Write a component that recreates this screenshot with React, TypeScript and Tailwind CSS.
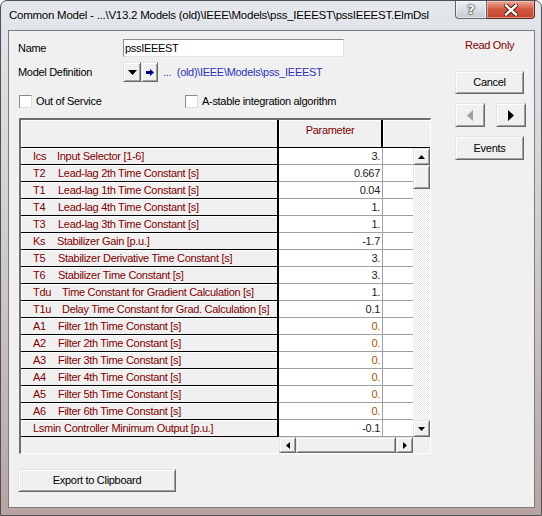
import React from 'react';

const rows = [
  { name: 'Ics', w: 'w-[24px]', desc: 'Input Selector [1-6]', value: '3.' },
  { name: 'T2', w: 'w-[25px]', desc: 'Lead-lag 2th Time Constant [s]', value: '0.667' },
  { name: 'T1', w: 'w-[25px]', desc: 'Lead-lag 1th Time Constant [s]', value: '0.04' },
  { name: 'T4', w: 'w-[25px]', desc: 'Lead-lag 4th Time Constant [s]', value: '1.' },
  { name: 'T3', w: 'w-[25px]', desc: 'Lead-lag 3th Time Constant [s]', value: '1.' },
  { name: 'Ks', w: 'w-[24px]', desc: 'Stabilizer Gain [p.u.]', value: '-1.7' },
  { name: 'T5', w: 'w-[25px]', desc: 'Stabilizer Derivative Time Constant [s]', value: '3.' },
  { name: 'T6', w: 'w-[25px]', desc: 'Stabilizer Time Constant [s]', value: '3.' },
  { name: 'Tdu', w: 'w-[29px]', desc: 'Time Constant for Gradient Calculation [s]', value: '1.' },
  { name: 'T1u', w: 'w-[29px]', desc: 'Delay Time Constant for Grad. Calculation [s]', value: '0.1' },
  { name: 'A1', w: 'w-[25px]', desc: 'Filter 1th Time Constant [s]', value: '0.' },
  { name: 'A2', w: 'w-[25px]', desc: 'Filter 2th Time Constant [s]', value: '0.' },
  { name: 'A3', w: 'w-[25px]', desc: 'Filter 3th Time Constant [s]', value: '0.' },
  { name: 'A4', w: 'w-[25px]', desc: 'Filter 4th Time Constant [s]', value: '0.' },
  { name: 'A5', w: 'w-[25px]', desc: 'Filter 5th Time Constant [s]', value: '0.' },
  { name: 'A6', w: 'w-[25px]', desc: 'Filter 6th Time Constant [s]', value: '0.' },
  { name: 'Lsmin', w: 'w-[31px]', desc: 'Controller Minimum Output [p.u.]', value: '-0.1' },
];

// classic raised 3D look used by buttons and scroll arrows
const raised =
  'bg-[#f0f0f0] border border-t-[#e3e3e3] border-l-[#e3e3e3] border-r-[#696969] border-b-[#696969] shadow-[inset_1px_1px_0_#fff,inset_-1px_-1px_0_#a0a0a0]';

const Tri = ({ dir, color = '#000' }: { dir: 'up' | 'down' | 'left' | 'right'; color?: string }) => {
  const pts = {
    up: '0,4 7,4 3.5,0',
    down: '0,0 7,0 3.5,4',
    left: '4,0 4,7 0,3.5',
    right: '0,0 0,7 4,3.5',
  }[dir];
  const vertical = dir === 'up' || dir === 'down';
  return (
    <svg width={vertical ? 7 : 4} height={vertical ? 4 : 7} viewBox={vertical ? '0 0 7 4' : '0 0 4 7'}>
      <polygon points={pts} fill={color} />
    </svg>
  );
};

const ScrollBtn = ({ dir, className = '' }: { dir: 'up' | 'down' | 'left' | 'right'; className?: string }) => (
  <div className={`${raised} flex items-center justify-center ${className}`}>
    <Tri dir={dir} />
  </div>
);

const Checkbox = ({ label }: { label: string }) => (
  <div className="flex items-center">
    <div className="w-[13px] h-[13px] bg-white border border-t-[#8a8a8a] border-l-[#8a8a8a] border-r-[#dcdcdc] border-b-[#dcdcdc]" />
    <span className="ml-[4px] leading-[13px]">{label}</span>
  </div>
);

const App: React.FC = () => {
  return (
    <div className="w-[542px] h-[516px] font-['Liberation_Sans',Arial,sans-serif] text-[11px] tracking-[-0.3px] text-black">
      <div className="w-full h-full flex flex-col rounded-t-[7px] border border-[#4d5157] bg-linear-to-b from-[#e3e7ec] via-[#cfcbcd] to-[#b7a4a1] overflow-hidden">
        {/* Title bar */}
        <div className="h-[29px] flex items-start">
          <div className="pl-[8px] pt-[7px] text-[11.5px] leading-[15px] tracking-[-0.25px] whitespace-nowrap [text-shadow:0_0_6px_#fff]">
            Common Model - ...\V13.2 Models (old)\IEEE\Models\pss_IEEEST\pssIEEEST.ElmDsl
          </div>
          <div className="ml-auto mr-[6px] flex shrink-0">
            <div className="w-[32px] h-[18px] rounded-bl-[4px] border border-t-0 border-[#62666d] bg-linear-to-b from-[#eef1f4] via-[#d9dee4] to-[#c3cad3] flex items-center justify-center shadow-[inset_0_0_0_1px_rgba(255,255,255,0.6)]">
              <span className="font-['DejaVu_Sans',sans-serif] font-bold text-[13px] leading-none tracking-normal text-white [text-shadow:0_0_1px_#333,0_0_2px_#333,0_0_2px_#444]">?</span>
            </div>
            <div className="w-[48px] h-[18px] rounded-br-[4px] border border-t-0 border-l-0 border-[#5a2620] bg-linear-to-b from-[#e9a89a] via-[#d3573f] to-[#c6432c] flex items-center justify-center shadow-[inset_0_0_0_1px_rgba(255,220,210,0.5)]">
              <svg width="14" height="12" viewBox="0 0 14 12">
                <path d="M2 1.5 L12 10.5 M12 1.5 L2 10.5" stroke="#3b1510" strokeWidth="4.2" strokeLinecap="square" />
                <path d="M2 1.5 L12 10.5 M12 1.5 L2 10.5" stroke="#fff" strokeWidth="2.4" strokeLinecap="square" />
              </svg>
            </div>
          </div>
        </div>

        {/* Client area */}
        <div className="ml-[7px] w-[527px] h-[478px] bg-[#f0f0f0] border border-[#7c7c7c] flex">
          {/* Left column */}
          <div className="w-[423px] pl-[9px] pt-[8px] flex flex-col">
            <div className="h-[18px] flex items-center">
              <span className="w-[105px]">Name</span>
              <div className="w-[221px] h-[18px] bg-white border border-t-[#8c8c8c] border-l-[#8c8c8c] border-r-[#e3e3e3] border-b-[#e3e3e3] pl-[1px] flex items-center">
                pssIEEEST
              </div>
            </div>

            <div className="mt-[5px] h-[20px] flex items-center">
              <span className="w-[105px]">Model Definition</span>
              <div className={`${raised} w-[18px] h-[20px] flex items-center justify-center`}>
                <svg width="9" height="5" viewBox="0 0 9 5">
                  <polygon points="0,0 9,0 4.5,5" fill="#000" />
                </svg>
              </div>
              <div className={`${raised} w-[17px] h-[20px] flex items-center justify-center`}>
                <svg width="8" height="7" viewBox="0 0 8 7">
                  <rect x="0" y="2" width="4" height="3" fill="#000080" />
                  <polygon points="4,0 8,3.5 4,7" fill="#000080" />
                </svg>
              </div>
              <span className="ml-[5px] text-[#3131b8] whitespace-pre">...  (old)\IEEE\Models\pss_IEEEST</span>
            </div>

            <div className="mt-[13px] pl-[1px] flex">
              <div className="w-[166px]">
                <Checkbox label="Out of Service" />
              </div>
              <Checkbox label="A-stable integration algorithm" />
            </div>

            {/* Parameter grid */}
            <div className="mt-[10px] ml-[1px] w-[412px] h-[336px] border-t-2 border-l-2 border-r border-b border-t-[#6d6d6d] border-l-[#6d6d6d] border-r-white border-b-white flex flex-col">
              <div className="h-[28px] flex">
                <div className="w-[258px] border-r-2 border-b border-black shadow-[inset_1px_1px_0_#fff]" />
                <div className="w-[104px] border-r-2 border-b border-black shadow-[inset_1px_1px_0_#fff] text-center pt-[2px] text-[#800000]">
                  Parameter
                </div>
                <div className="flex-1 border-b border-black shadow-[inset_1px_1px_0_#fff]" />
              </div>

              <div className="h-[289px] flex">
                <div className="w-[392px] flex flex-col">
                  {rows.map(r => (
                    <div key={r.name} className="h-[17px] flex">
                      <div className="w-[258px] bg-[#f0f0f0] border-r-2 border-r-black border-b border-b-black shadow-[inset_1px_1px_0_#fff] pl-[12px] flex items-center text-[#800000] whitespace-nowrap">
                        <span className={`inline-block shrink-0 ${r.w}`}>{r.name}</span>
                        <span>{r.desc}</span>
                      </div>
                      <div className={`w-[104px] bg-white border-r border-b border-[#a0a0a0] flex items-center justify-end pr-[2px] ${r.value === '0.' ? 'text-[#a35a08]' : 'text-[#1c1c1c]'}`}>
                        {r.value}
                      </div>
                      <div className="w-[30px] bg-white border-b border-[#a0a0a0]" />
                    </div>
                  ))}
                </div>
                <div className="w-[17px] flex flex-col">
                  <ScrollBtn dir="up" className="h-[17px]" />
                  <div className={`${raised} h-[24px]`} />
                  <div className="flex-1 bg-[repeating-conic-gradient(#ffffff_0%_25%,#e8e8e8_0%_50%)] bg-size-[2px_2px]" />
                  <ScrollBtn dir="down" className="h-[17px]" />
                </div>
              </div>

              <div className="h-[16px] flex">
                <div className="w-[258px]" />
                <div className="w-[134px] flex">
                  <ScrollBtn dir="left" className="w-[17px]" />
                  <div className={`${raised} flex-1`} />
                  <ScrollBtn dir="right" className="w-[17px]" />
                </div>
                <div className="flex-1" />
              </div>
            </div>

            <div className={`${raised} mt-[15px] w-[158px] h-[23px] flex items-center justify-center`}>
              Export to Clipboard
            </div>
          </div>

          {/* Right column */}
          <div className="ml-[23px] w-[71px] flex flex-col pt-[7px]">
            <div className="pl-[10px] leading-[14px] text-[#800000]">Read Only</div>
            <div className={`${raised} mt-[19px] w-[69px] h-[23px] flex items-center justify-center`}>Cancel</div>
            <div className="mt-[9px] flex">
              <div className={`${raised} w-[30px] h-[24px] flex items-center justify-center`}>
                <svg width="6" height="11" viewBox="0 0 6 11">
                  <polygon points="6,0 6,11 0,5.5" fill="#a0a0a0" />
                </svg>
              </div>
              <div className={`${raised} ml-[11px] w-[30px] h-[24px] flex items-center justify-center`}>
                <svg width="6" height="11" viewBox="0 0 6 11">
                  <polygon points="0,0 0,11 6,5.5" fill="#000" />
                </svg>
              </div>
            </div>
            <div className={`${raised} mt-[9px] w-[69px] h-[24px] flex items-center justify-center`}>Events</div>
          </div>
        </div>
      </div>
    </div>
  );
};

export default App;
